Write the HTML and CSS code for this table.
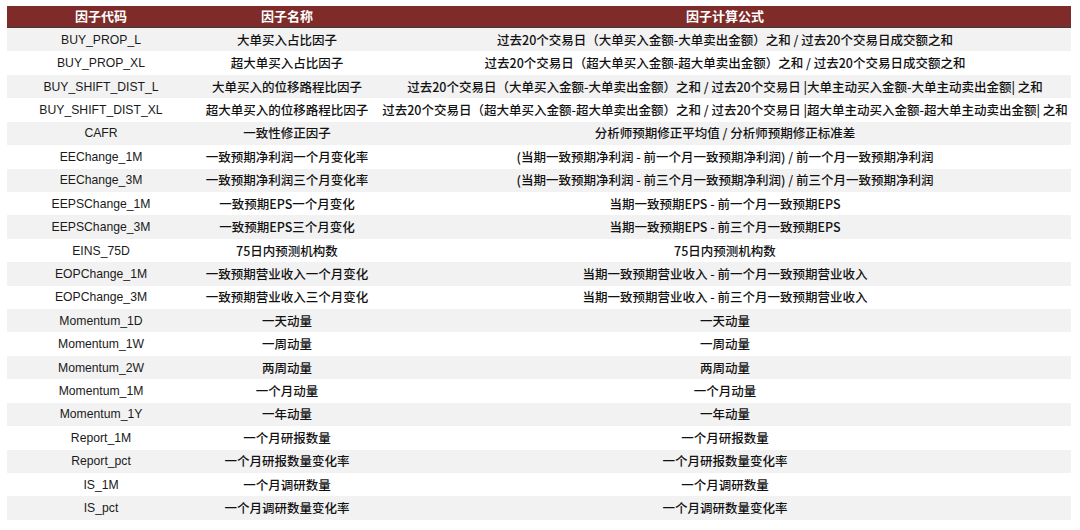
FILE: index.html
```html
<!DOCTYPE html>
<html lang="zh-CN">
<head>
<meta charset="utf-8">
<title>因子列表</title>
<link rel="stylesheet" href="styles.css">
</head>
<body>
<table class="factors">
  <colgroup>
    <col class="c-code">
    <col class="c-name">
    <col class="c-formula">
  </colgroup>
  <thead>
    <tr><th>因子代码</th><th>因子名称</th><th>因子计算公式</th></tr>
  </thead>
  <tbody>
    <tr><td class="code">BUY_PROP_L</td><td class="name">大单买入占比因子</td><td>过去20个交易日（大单买入金额-大单卖出金额）之和 / 过去20个交易日成交额之和</td></tr>
    <tr><td class="code">BUY_PROP_XL</td><td class="name">超大单买入占比因子</td><td>过去20个交易日（超大单买入金额-超大单卖出金额）之和 / 过去20个交易日成交额之和</td></tr>
    <tr><td class="code">BUY_SHIFT_DIST_L</td><td class="name">大单买入的位移路程比因子</td><td>过去20个交易日（大单买入金额-大单卖出金额）之和 / 过去20个交易日 |大单主动买入金额-大单主动卖出金额| 之和</td></tr>
    <tr><td class="code">BUY_SHIFT_DIST_XL</td><td class="name">超大单买入的位移路程比因子</td><td>过去20个交易日（超大单买入金额-超大单卖出金额）之和 / 过去20个交易日 |超大单主动买入金额-超大单主动卖出金额| 之和</td></tr>
    <tr><td class="code">CAFR</td><td class="name">一致性修正因子</td><td>分析师预期修正平均值 / 分析师预期修正标准差</td></tr>
    <tr><td class="code">EEChange_1M</td><td class="name">一致预期净利润一个月变化率</td><td>(当期一致预期净利润 - 前一个月一致预期净利润) / 前一个月一致预期净利润</td></tr>
    <tr><td class="code">EEChange_3M</td><td class="name">一致预期净利润三个月变化率</td><td>(当期一致预期净利润 - 前三个月一致预期净利润) / 前三个月一致预期净利润</td></tr>
    <tr><td class="code">EEPSChange_1M</td><td class="name">一致预期EPS一个月变化</td><td>当期一致预期EPS - 前一个月一致预期EPS</td></tr>
    <tr><td class="code">EEPSChange_3M</td><td class="name">一致预期EPS三个月变化</td><td>当期一致预期EPS - 前三个月一致预期EPS</td></tr>
    <tr><td class="code">EINS_75D</td><td class="name">75日内预测机构数</td><td>75日内预测机构数</td></tr>
    <tr><td class="code">EOPChange_1M</td><td class="name">一致预期营业收入一个月变化</td><td>当期一致预期营业收入 - 前一个月一致预期营业收入</td></tr>
    <tr><td class="code">EOPChange_3M</td><td class="name">一致预期营业收入三个月变化</td><td>当期一致预期营业收入 - 前三个月一致预期营业收入</td></tr>
    <tr><td class="code">Momentum_1D</td><td class="name">一天动量</td><td>一天动量</td></tr>
    <tr><td class="code">Momentum_1W</td><td class="name">一周动量</td><td>一周动量</td></tr>
    <tr><td class="code">Momentum_2W</td><td class="name">两周动量</td><td>两周动量</td></tr>
    <tr><td class="code">Momentum_1M</td><td class="name">一个月动量</td><td>一个月动量</td></tr>
    <tr><td class="code">Momentum_1Y</td><td class="name">一年动量</td><td>一年动量</td></tr>
    <tr><td class="code">Report_1M</td><td class="name">一个月研报数量</td><td>一个月研报数量</td></tr>
    <tr><td class="code">Report_pct</td><td class="name">一个月研报数量变化率</td><td>一个月研报数量变化率</td></tr>
    <tr><td class="code">IS_1M</td><td class="name">一个月调研数量</td><td>一个月调研数量</td></tr>
    <tr><td class="code">IS_pct</td><td class="name">一个月调研数量变化率</td><td>一个月调研数量变化率</td></tr>
  </tbody>
</table>
</body>
</html>
```

FILE: styles.css
```css
html, body {
  margin: 0;
  padding: 0;
  background: #ffffff;
}

body {
  padding: 6px 9px 0 7px;
  font-family: "Liberation Sans", "Noto Sans CJK SC", sans-serif;
  color: #111111;
}

.factors {
  width: 1064px;
  border-collapse: collapse;
  table-layout: fixed;
}

.c-code { width: 188px; }
.c-name { width: 184px; }
.c-formula { width: 692px; }

.factors th {
  height: 21px;
  padding: 0;
  background: #7e2b29;
  color: #ffffff;
  font-size: 13px;
  font-weight: 700;
  text-align: center;
  vertical-align: middle;
  border-bottom: 1px solid #3c3c3c;
  line-height: 21px;
}

.factors td {
  height: 23.43px;
  padding: 0;
  font-size: 12.5px;
  line-height: 16px;
  text-align: center;
  vertical-align: middle;
  white-space: nowrap;
  font-family: "Noto Sans CJK SC", "Liberation Sans", sans-serif;
  font-weight: 500;
  color: #111111;
}

.factors td.code {
  font-family: "Liberation Sans", "Noto Sans CJK SC", sans-serif;
  font-size: 12.2px;
  font-weight: 400;
  color: #1a1a1a;
}

.factors tbody tr:nth-child(odd) {
  background: #f2f2f2;
}
```
